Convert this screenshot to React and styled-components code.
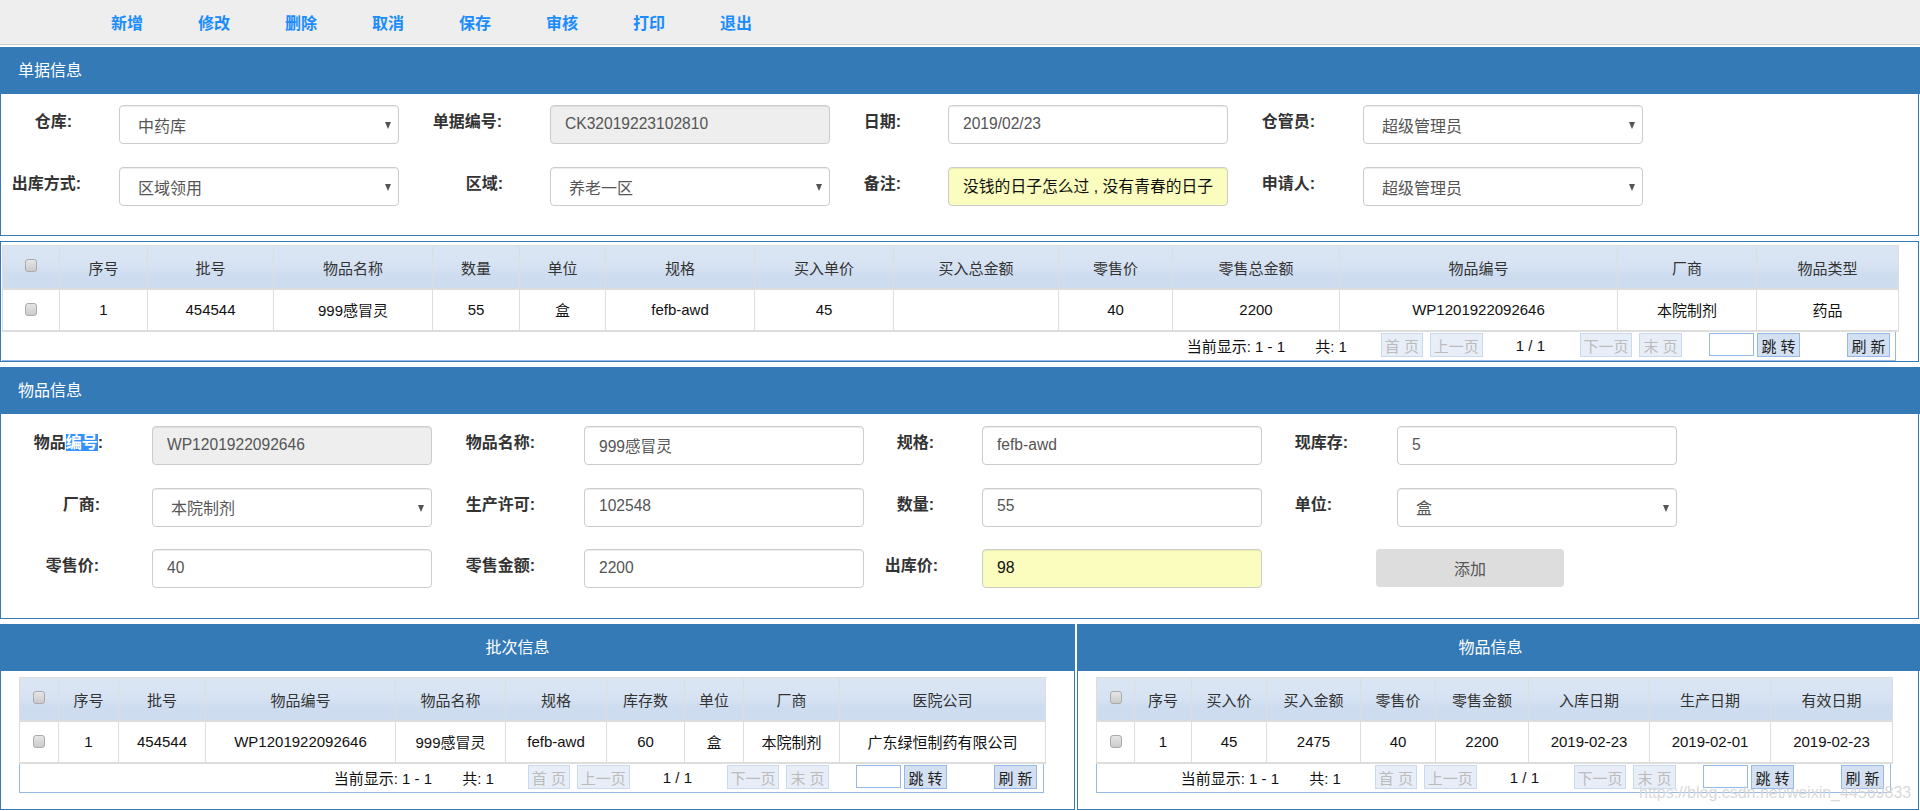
import React from 'react';
import styled, { createGlobalStyle } from 'styled-components';

const FONT = '"Liberation Sans", "Noto Sans CJK SC", sans-serif';

const GlobalStyle = createGlobalStyle`
  html, body {
    margin: 0;
    padding: 0;
    background: #fff;
    overflow: hidden;
  }
  body {
    font-family: ${FONT};
    color: #333;
  }
  * {
    box-sizing: border-box;
  }
`;

const Page = styled.div`
  position: relative;
  width: 1920px;
  height: 811px;
  overflow: hidden;
`;

const Toolbar = styled.div`
  display: flex;
  gap: 55px;
  height: 45px;
  padding: 0 0 1px 111px;
  margin-bottom: 2px;
  background: #eee;
  border-bottom: 1px solid #ccc;
  align-items: center;
`;

const ToolLink = styled.a`
  width: 32px;
  font-size: 16px;
  font-weight: bold;
  color: #1a8cff;
  white-space: nowrap;
  cursor: pointer;
`;

const Panel = styled.section`
  margin-top: ${p => p.$top || 0}px;
`;

const PanelHead = styled.div`
  height: 47px;
  padding: ${p => (p.$center ? `0 ${p.$shift}px 0 0` : '0 0 0 18px')};
  background: #337ab7;
  color: #fff;
  font-size: 16px;
  line-height: 47px;
  text-align: ${p => (p.$center ? 'center' : 'left')};
`;

const PanelBody = styled.div`
  margin-right: ${p => p.$inset || 0}px;
  height: ${p => p.$height}px;
  padding: ${p => p.$pad};
  border: 1px solid #337ab7;
  border-top: none;
`;

const FormGrid = styled.div`
  display: grid;
  grid-template-columns: ${p => p.$cols};
  grid-auto-rows: 39px;
  row-gap: ${p => p.$gap}px;
`;

const Label = styled.label`
  align-self: start;
  height: 34px;
  line-height: 34px;
  padding-right: ${p => (p.$pad === undefined ? 48 : p.$pad)}px;
  font-size: 16px;
  font-weight: bold;
  color: #333;
  text-align: right;
  white-space: nowrap;
`;

const Selected = styled.span`
  background: #3390ff;
  color: #fff;
`;

const TextField = styled.input`
  width: 280px;
  height: 39px;
  padding: 0 8px 2px 14px;
  border: 1px solid #ccc;
  border-radius: 4px;
  box-shadow: inset 0 1px 1px rgba(0, 0, 0, 0.075);
  background: ${p => (p.$note ? '#fafdbd' : p.disabled ? '#eee' : '#fff')};
  color: ${p => (p.$note ? '#111' : '#555')};
  font: ${p => (p.$note ? 15.8 : 15.6)}px ${FONT};
  opacity: 1;
  -webkit-text-fill-color: ${p => (p.$note ? '#111' : '#555')};
  outline: none;
`;

const SelectWrap = styled.div`
  position: relative;
  width: 280px;
  height: 39px;
  &::after {
    content: '';
    position: absolute;
    top: 17px;
    right: 8px;
    border-left: 3.5px solid transparent;
    border-right: 3.5px solid transparent;
    border-top: 7px solid #555;
    pointer-events: none;
  }
`;

const SelectBox = styled.select`
  width: 100%;
  height: 100%;
  padding: 3px 20px 0 18px;
  border: 1px solid #ccc;
  border-radius: 4px;
  box-shadow: inset 0 1px 1px rgba(0, 0, 0, 0.075);
  background: #fff;
  color: #555;
  font: 16px ${FONT};
  appearance: none;
  outline: none;
`;

const AddButton = styled.button`
  grid-column: 7 / 9;
  width: 188px;
  height: 38px;
  margin-left: 114px;
  border: none;
  border-radius: 4px;
  background: #ddd;
  color: #555;
  font: 16px ${FONT};
`;

const GridPanel = styled.section`
  height: 121px;
  margin: 5px 1px 0 0;
  padding: 3px 0 0 1px;
  border: 1px solid #337ab7;
`;

const DataTable = styled.table`
  width: ${p => p.$width}px;
  border-collapse: separate;
  border-spacing: 0;
  table-layout: fixed;
  font-size: 15px;
`;

const HeadCell = styled.th`
  height: 45px;
  padding: 1px 0 0;
  font-weight: normal;
  color: #333;
  text-align: center;
  background: linear-gradient(to bottom, #dbe6f4 0%, #d7e3f3 45%, #cddcef 70%, #cddcef 100%);
  border-top: 1px solid #ddd;
  border-right: 1px solid #ddd;
  border-bottom: 2px solid #ddd;
  &:first-child {
    border-left: 1px solid #ddd;
    padding: 0 0 4px;
  }
`;

const BodyCell = styled.td`
  height: 42px;
  padding: 0 0 2px;
  color: #111;
  text-align: center;
  border-right: 1px solid #ddd;
  border-bottom: 2px solid #ddd;
  white-space: nowrap;
  &:first-child {
    border-left: 1px solid #ddd;
  }
`;

const Check = styled.input.attrs({ type: 'checkbox' })`
  display: block;
  width: 12px;
  height: 13px;
  margin: 0 auto;
  border: 1px solid #aaa;
  border-radius: 3px;
  background: linear-gradient(to bottom, #e6e6e6, #cbcbcb);
  appearance: none;
`;

const Pager = styled.div`
  display: flex;
  justify-content: flex-end;
  align-items: center;
  width: ${p => p.$width}px;
  height: 29px;
  padding: 0 ${p => (p.$boxed ? 6 : 5)}px 2px 0;
  border-right: 1px solid #95b8e7;
  border-bottom: 1px solid #95b8e7;
  border-left: ${p => (p.$boxed ? '1px solid #95b8e7' : 'none')};
  font-size: 15px;
  color: #111;
  white-space: nowrap;
`;

const PagerText = styled.span`
  margin-left: ${p => p.$gap}px;
`;

const PagerButton = styled.button`
  height: 24px;
  width: ${p => p.$w}px;
  margin-left: ${p => p.$gap}px;
  padding: 0;
  border: 1px solid ${p => (p.disabled ? '#c9daf0' : '#95b8e7')};
  background: ${p => (p.disabled ? '#e8eef7' : '#d3e0f2')};
  color: ${p => (p.disabled ? '#bbb' : '#222')};
  font: 15px ${FONT};
`;

const PagerInput = styled.input`
  width: 45px;
  height: 23px;
  margin: 0 0 1px 27px;
  border: 1px solid #95b8e7;
  background: #fff;
  outline: none;
`;

const BottomRow = styled.div`
  display: flex;
  gap: 2px;
  margin-top: 5px;
`;

const SidePanel = styled.section`
  width: ${p => p.$width}px;
`;

const Watermark = styled.div`
  position: absolute;
  left: 1639px;
  top: 784px;
  font-size: 16px;
  color: rgba(190, 190, 190, 0.6);
  text-shadow: 0 0 1px rgba(255, 255, 255, 0.8);
  white-space: nowrap;
  pointer-events: none;
`;

const TOOLS = ['新增', '修改', '删除', '取消', '保存', '审核', '打印', '退出'];

function TextInput({ value, disabled, note }) {
  return <TextField value={value} disabled={disabled} $note={note} readOnly />;
}

function SelectInput({ value }) {
  return (
    <SelectWrap>
      <SelectBox value={value} onChange={() => {}}>
        <option>{value}</option>
      </SelectBox>
    </SelectWrap>
  );
}

function Grid({ columns, rows, width }) {
  return (
    <DataTable $width={width}>
      <colgroup>
        <col width={columns.first} />
        {columns.list.map(c => (
          <col key={c[0]} width={c[1]} />
        ))}
      </colgroup>
      <thead>
        <tr>
          <HeadCell><Check /></HeadCell>
          {columns.list.map(c => (
            <HeadCell key={c[0]}>{c[0]}</HeadCell>
          ))}
        </tr>
      </thead>
      <tbody>
        {rows.map((row, i) => (
          <tr key={i}>
            <BodyCell><Check /></BodyCell>
            {row.map((v, j) => (
              <BodyCell key={j}>{v}</BodyCell>
            ))}
          </tr>
        ))}
      </tbody>
    </DataTable>
  );
}

function PagerBar({ width, boxed }) {
  return (
    <Pager $width={width} $boxed={boxed}>
      <PagerText $gap={0}>当前显示: 1 - 1</PagerText>
      <PagerText $gap={30}>共: 1</PagerText>
      <PagerButton disabled $w={42} $gap={34}>首 页</PagerButton>
      <PagerButton disabled $w={53} $gap={7}>上一页</PagerButton>
      <PagerText $gap={33}>1 / 1</PagerText>
      <PagerButton disabled $w={52} $gap={35}>下一页</PagerButton>
      <PagerButton disabled $w={43} $gap={7}>末 页</PagerButton>
      <PagerInput />
      <PagerButton $w={43} $gap={3}>跳 转</PagerButton>
      <PagerButton $w={43} $gap={47}>刷 新</PagerButton>
    </Pager>
  );
}

const OUT_COLUMNS = {
  first: 58,
  list: [
    ['序号', 88], ['批号', 126], ['物品名称', 159], ['数量', 87], ['单位', 86], ['规格', 149],
    ['买入单价', 139], ['买入总金额', 165], ['零售价', 114], ['零售总金额', 167],
    ['物品编号', 278], ['厂商', 139], ['物品类型', 142],
  ],
};
const OUT_ROWS = [
  ['1', '454544', '999感冒灵', '55', '盒', 'fefb-awd', '45', '', '40', '2200', 'WP1201922092646', '本院制剂', '药品'],
];

const BATCH_COLUMNS = {
  first: 40,
  list: [
    ['序号', 60], ['批号', 87], ['物品编号', 190], ['物品名称', 110], ['规格', 101],
    ['库存数', 78], ['单位', 59], ['厂商', 96], ['医院公司', 206],
  ],
};
const BATCH_ROWS = [
  ['1', '454544', 'WP1201922092646', '999感冒灵', 'fefb-awd', '60', '盒', '本院制剂', '广东绿恒制药有限公司'],
];

const GOODS_COLUMNS = {
  first: 39,
  list: [
    ['序号', 57], ['买入价', 75], ['买入金额', 94], ['零售价', 75], ['零售金额', 93],
    ['入库日期', 121], ['生产日期', 121], ['有效日期', 122],
  ],
};
const GOODS_ROWS = [
  ['1', '45', '2475', '40', '2200', '2019-02-23', '2019-02-01', '2019-02-23'],
];

export default function App() {
  return (
    <Page>
      <GlobalStyle />
      <Toolbar>
        {TOOLS.map(t => (
          <ToolLink key={t}>{t}</ToolLink>
        ))}
      </Toolbar>

      <Panel>
        <PanelHead>单据信息</PanelHead>
        <PanelBody $inset={1} $height={142} $pad="11px 0 0">
          <FormGrid $gap={23} $cols="118px 280px 151px 280px 118px 280px 135px 280px">
            <Label $pad={47}>仓库:</Label>
            <SelectInput value="中药库" />
            <Label>单据编号:</Label>
            <TextInput value="CK32019223102810" disabled />
            <Label $pad={47}>日期:</Label>
            <TextInput value="2019/02/23" />
            <Label>仓管员:</Label>
            <SelectInput value="超级管理员" />

            <Label $pad={38}>出库方式:</Label>
            <SelectInput value="区域领用" />
            <Label $pad={47}>区域:</Label>
            <SelectInput value="养老一区" />
            <Label $pad={47}>备注:</Label>
            <TextInput value="没钱的日子怎么过 , 没有青春的日子" note />
            <Label>申请人:</Label>
            <SelectInput value="超级管理员" />
          </FormGrid>
        </PanelBody>
      </Panel>

      <GridPanel>
        <Grid columns={OUT_COLUMNS} rows={OUT_ROWS} width={1897} />
        <PagerBar width={1894} />
      </GridPanel>

      <Panel $top={5}>
        <PanelHead>物品信息</PanelHead>
        <PanelBody $inset={1} $height={205} $pad="12px 0 0">
          <FormGrid $gap={22.5} $cols="151px 280px 152px 280px 118px 280px 135px 280px">
            <Label $pad={49}>物品<Selected>编号</Selected>:</Label>
            <TextInput value="WP1201922092646" disabled />
            <Label $pad={49}>物品名称:</Label>
            <TextInput value="999感冒灵" />
            <Label>规格:</Label>
            <TextInput value="fefb-awd" />
            <Label $pad={49}>现库存:</Label>
            <TextInput value="5" />

            <Label $pad={52}>厂商:</Label>
            <SelectInput value="本院制剂" />
            <Label $pad={49}>生产许可:</Label>
            <TextInput value="102548" />
            <Label>数量:</Label>
            <TextInput value="55" />
            <Label $pad={65}>单位:</Label>
            <SelectInput value="盒" />

            <Label $pad={53}>零售价:</Label>
            <TextInput value="40" />
            <Label $pad={49}>零售金额:</Label>
            <TextInput value="2200" />
            <Label $pad={44}>出库价:</Label>
            <TextInput value="98" note />
            <AddButton>添加</AddButton>
          </FormGrid>
        </PanelBody>
      </Panel>

      <BottomRow>
        <SidePanel $width={1075}>
          <PanelHead $center $shift={40}>批次信息</PanelHead>
          <PanelBody $height={139} $pad="6px 0 0 18px">
            <Grid columns={BATCH_COLUMNS} rows={BATCH_ROWS} width={1027} />
            <PagerBar width={1025} boxed />
          </PanelBody>
        </SidePanel>
        <SidePanel $width={843}>
          <PanelHead $center $shift={16}>物品信息</PanelHead>
          <PanelBody $inset={1} $height={139} $pad="6px 0 0 18px">
            <Grid columns={GOODS_COLUMNS} rows={GOODS_ROWS} width={797} />
            <PagerBar width={795} boxed />
          </PanelBody>
        </SidePanel>
      </BottomRow>

      <Watermark>https://blog.csdn.net/weixin_44569833</Watermark>
    </Page>
  );
}
